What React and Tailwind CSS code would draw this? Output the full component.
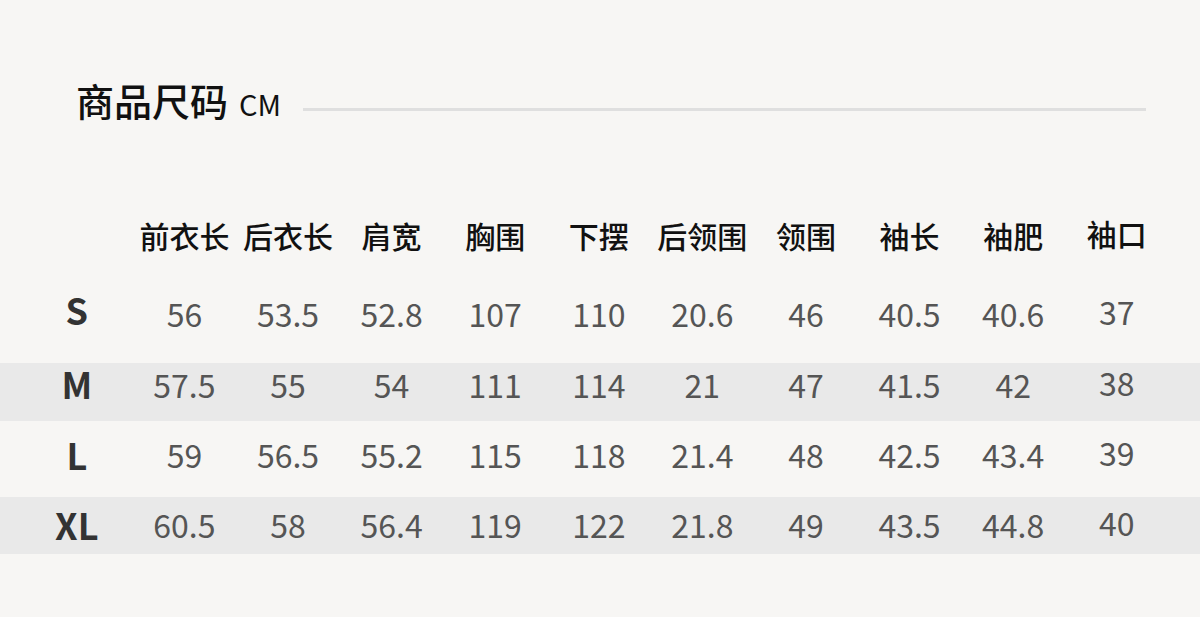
const headers = ["前衣长", "后衣长", "肩宽", "胸围", "下摆", "后领围", "领围", "袖长", "袖肥", "袖口"];

const rows = [
  { size: "S", values: ["56", "53.5", "52.8", "107", "110", "20.6", "46", "40.5", "40.6", "37"], h: "h-[101px]", pt: "pt-[35px]", sizeShift: "-translate-y-[4px]", stripe: false },
  { size: "M", values: ["57.5", "55", "54", "111", "114", "21", "47", "41.5", "42", "38"], h: "h-[58px]", pt: "pt-[5px]", sizeShift: "-translate-y-[1px]", stripe: true },
  { size: "L", values: ["59", "56.5", "55.2", "115", "118", "21.4", "48", "42.5", "43.4", "39"], h: "h-[76px]", pt: "pt-[17px]", sizeShift: "", stripe: false },
  { size: "XL", values: ["60.5", "58", "56.4", "119", "122", "21.8", "49", "43.5", "44.8", "40"], h: "h-[57px]", pt: "pt-[11px]", sizeShift: "", stripe: true },
];

const font = { fontFamily: '"Noto Sans CJK SC", "Noto Sans", sans-serif' };

export default function App() {
  return (
    <div className="w-[1200px] h-[617px] bg-[#f7f6f4] overflow-hidden" style={font}>
      {/* title */}
      <div className="flex items-end pt-[81px] pl-[76px] pr-[54px]">
        <div className="flex items-baseline">
          <span className="text-[38px] leading-none font-medium text-[#111]">商品尺码</span>
          <span className="ml-[11px] text-[29px] leading-none text-[#111]">CM</span>
        </div>
        <div className="flex-1 ml-[22px] mb-[8px] h-[3px] bg-[#dfdfdf]" />
      </div>

      {/* header row */}
      <div className="mt-[89px] h-[54px] pl-[25px] grid grid-cols-[107.6px_repeat(10,103.6px)] items-center">
        <div />
        {headers.map((h, i) => (
          <div
            key={h}
            className={
              "text-center text-[30px] leading-none font-medium text-[#111] whitespace-nowrap" +
              (i === headers.length - 1 ? " -translate-y-[2px]" : "")
            }
          >
            {h}
          </div>
        ))}
      </div>

      {/* body rows */}
      {rows.map((r) => (
        <div key={r.size} className={`${r.h} ${r.pt} ${r.stripe ? "bg-[#e9e9e9]" : ""}`}>
          <div className="pl-[25px] grid grid-cols-[107.6px_repeat(10,103.6px)] items-start">
            <div className={`pr-[4px] text-center text-[36px] leading-none font-semibold text-[#333] -mt-[2px] ${r.sizeShift}`}>
              {r.size}
            </div>
            {r.values.map((v, i) => (
              <div
                key={i}
                className={
                  "text-center text-[32px] leading-none font-normal text-[#555]" +
                  (i === r.values.length - 1 ? " -translate-y-[2px]" : "")
                }
              >
                {v}
              </div>
            ))}
          </div>
        </div>
      ))}
    </div>
  );
}
